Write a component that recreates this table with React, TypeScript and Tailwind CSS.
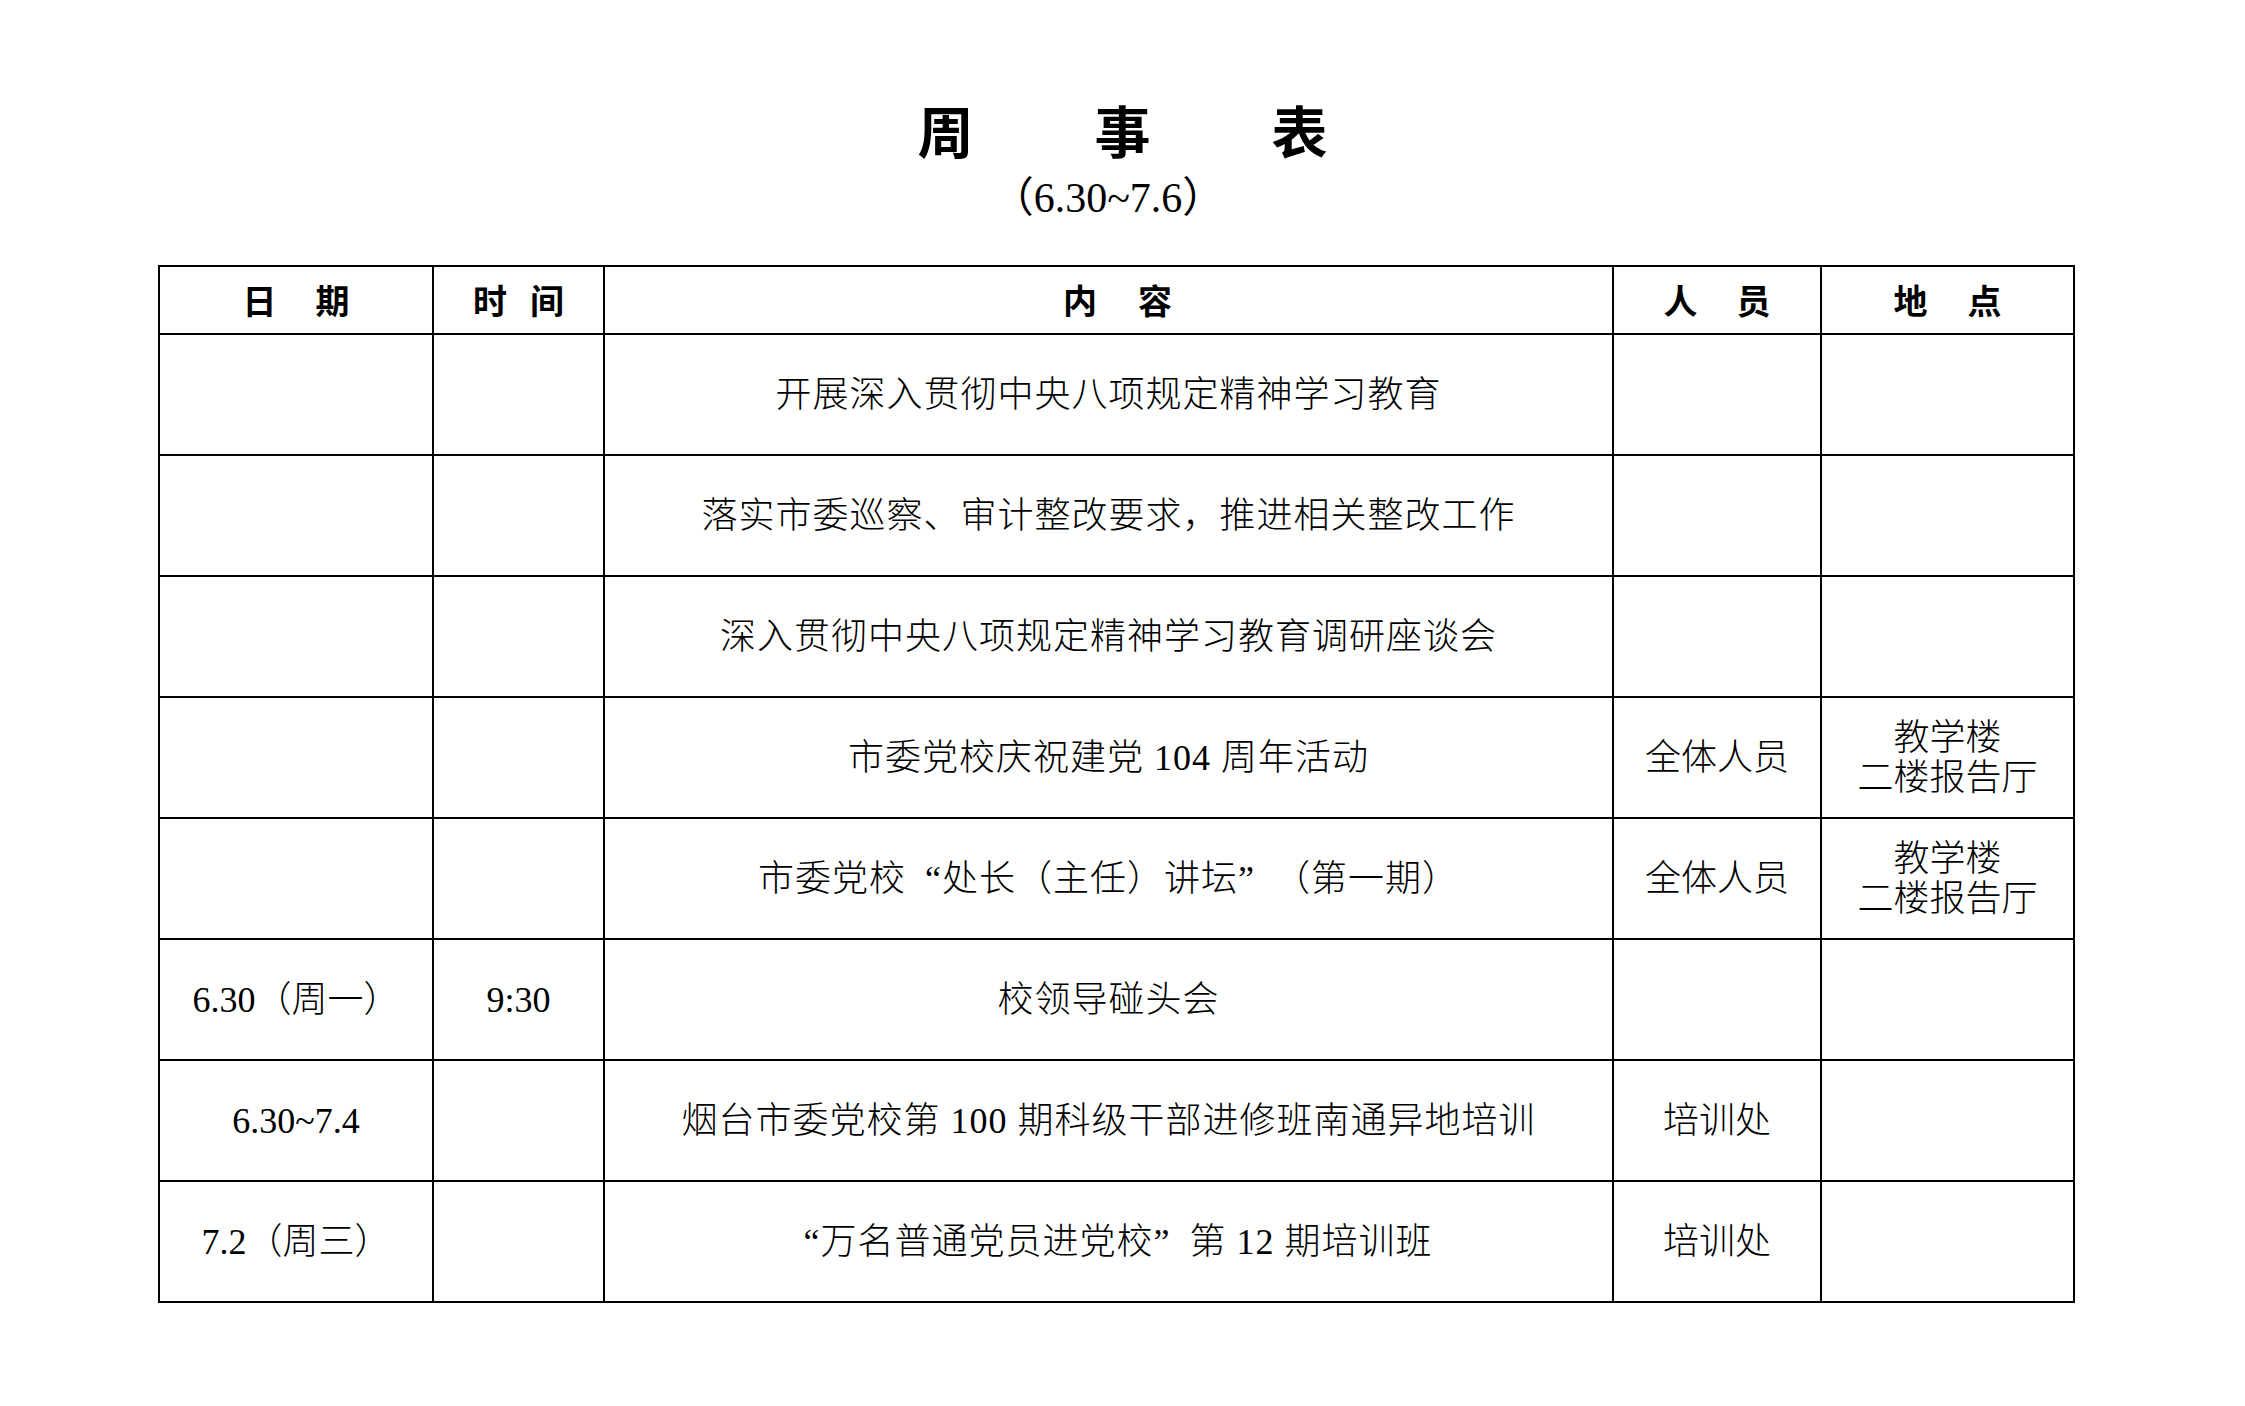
import type { ReactNode } from "react";

type Row = {
  date: string;
  time: string;
  content: ReactNode;
  people: string;
  place: string[];
};

// full-width quotes: “ sits on the right of its box, ” on the left
const LQ = () => <span className="inline-block w-[1em] text-right">“</span>;
const RQ = () => <span className="inline-block w-[1em] text-left">”</span>;

const rows: Row[] = [
  { date: "", time: "", content: "开展深入贯彻中央八项规定精神学习教育", people: "", place: [] },
  { date: "", time: "", content: "落实市委巡察、审计整改要求，推进相关整改工作", people: "", place: [] },
  { date: "", time: "", content: "深入贯彻中央八项规定精神学习教育调研座谈会", people: "", place: [] },
  {
    date: "",
    time: "",
    content: "市委党校庆祝建党 104 周年活动",
    people: "全体人员",
    place: ["教学楼", "二楼报告厅"],
  },
  {
    date: "",
    time: "",
    content: (
      <>
        市委党校<LQ />处长（主任）讲坛<RQ />（第一期）
      </>
    ),
    people: "全体人员",
    place: ["教学楼", "二楼报告厅"],
  },
  { date: "6.30（周一）", time: "9:30", content: "校领导碰头会", people: "", place: [] },
  {
    date: "6.30~7.4",
    time: "",
    content: "烟台市委党校第 100 期科级干部进修班南通异地培训",
    people: "培训处",
    place: [],
  },
  {
    date: "7.2（周三）",
    time: "",
    content: (
      <>
        <LQ />万名普通党员进党校<RQ />第 12 期培训班
      </>
    ),
    people: "培训处",
    place: [],
  },
];

function HeadCell({ chars, gap, extra = "" }: { chars: string[]; gap: string; extra?: string }) {
  return (
    <th className="border-2 border-black p-0 align-middle font-bold">
      <div className={`flex justify-center ${gap} ${extra}`}>
        {chars.map((c) => (
          <span key={c}>{c}</span>
        ))}
      </div>
    </th>
  );
}

const cell = "border-2 border-black p-0 text-center align-middle";

export default function App() {
  return (
    <div className="min-h-screen bg-white text-black">
      <div className="flex justify-center gap-[121px] pt-[99px] font-['Noto_Sans_CJK_SC',sans-serif] text-[56px] leading-[60px] font-bold">
        <span>周</span>
        <span>事</span>
        <span>表</span>
      </div>
      <div className="mt-[14px] flex justify-center pr-[29px] font-['Liberation_Serif','Noto_Sans_CJK_SC',serif] text-[42px] leading-[50px]">
        （6.30~7.6）
      </div>

      <div className="mt-[42px] pl-[158px]">
        <table className="w-[1915px] table-fixed border-collapse font-['Liberation_Serif','Noto_Sans_CJK_SC',serif] text-[36px] font-light">
          <colgroup>
            <col className="w-[274px]" />
            <col className="w-[171px]" />
            <col className="w-[1009px]" />
            <col className="w-[208px]" />
            <col className="w-[253px]" />
          </colgroup>
          <thead>
            <tr className="h-[68px] font-['Noto_Sans_CJK_SC',sans-serif] text-[34px] leading-[40px]">
              <HeadCell chars={["日", "期"]} gap="gap-[39px]" />
              <HeadCell chars={["时", "间"]} gap="gap-[23px]" />
              <HeadCell chars={["内", "容"]} gap="gap-[41px]" extra="pl-[18px]" />
              <HeadCell chars={["人", "员"]} gap="gap-[39px]" />
              <HeadCell chars={["地", "点"]} gap="gap-[40px]" />
            </tr>
          </thead>
          <tbody>
            {rows.map((r, i) => (
              <tr key={i} className="h-[121px] leading-[40px]">
                <td className={cell}>{r.date}</td>
                <td className={cell}>{r.time}</td>
                <td className={`${cell} tracking-[1px]`}>{r.content}</td>
                <td className={cell}>{r.people}</td>
                <td className={cell}>
                  {r.place.map((p) => (
                    <div key={p}>{p}</div>
                  ))}
                </td>
              </tr>
            ))}
          </tbody>
        </table>
      </div>
    </div>
  );
}
